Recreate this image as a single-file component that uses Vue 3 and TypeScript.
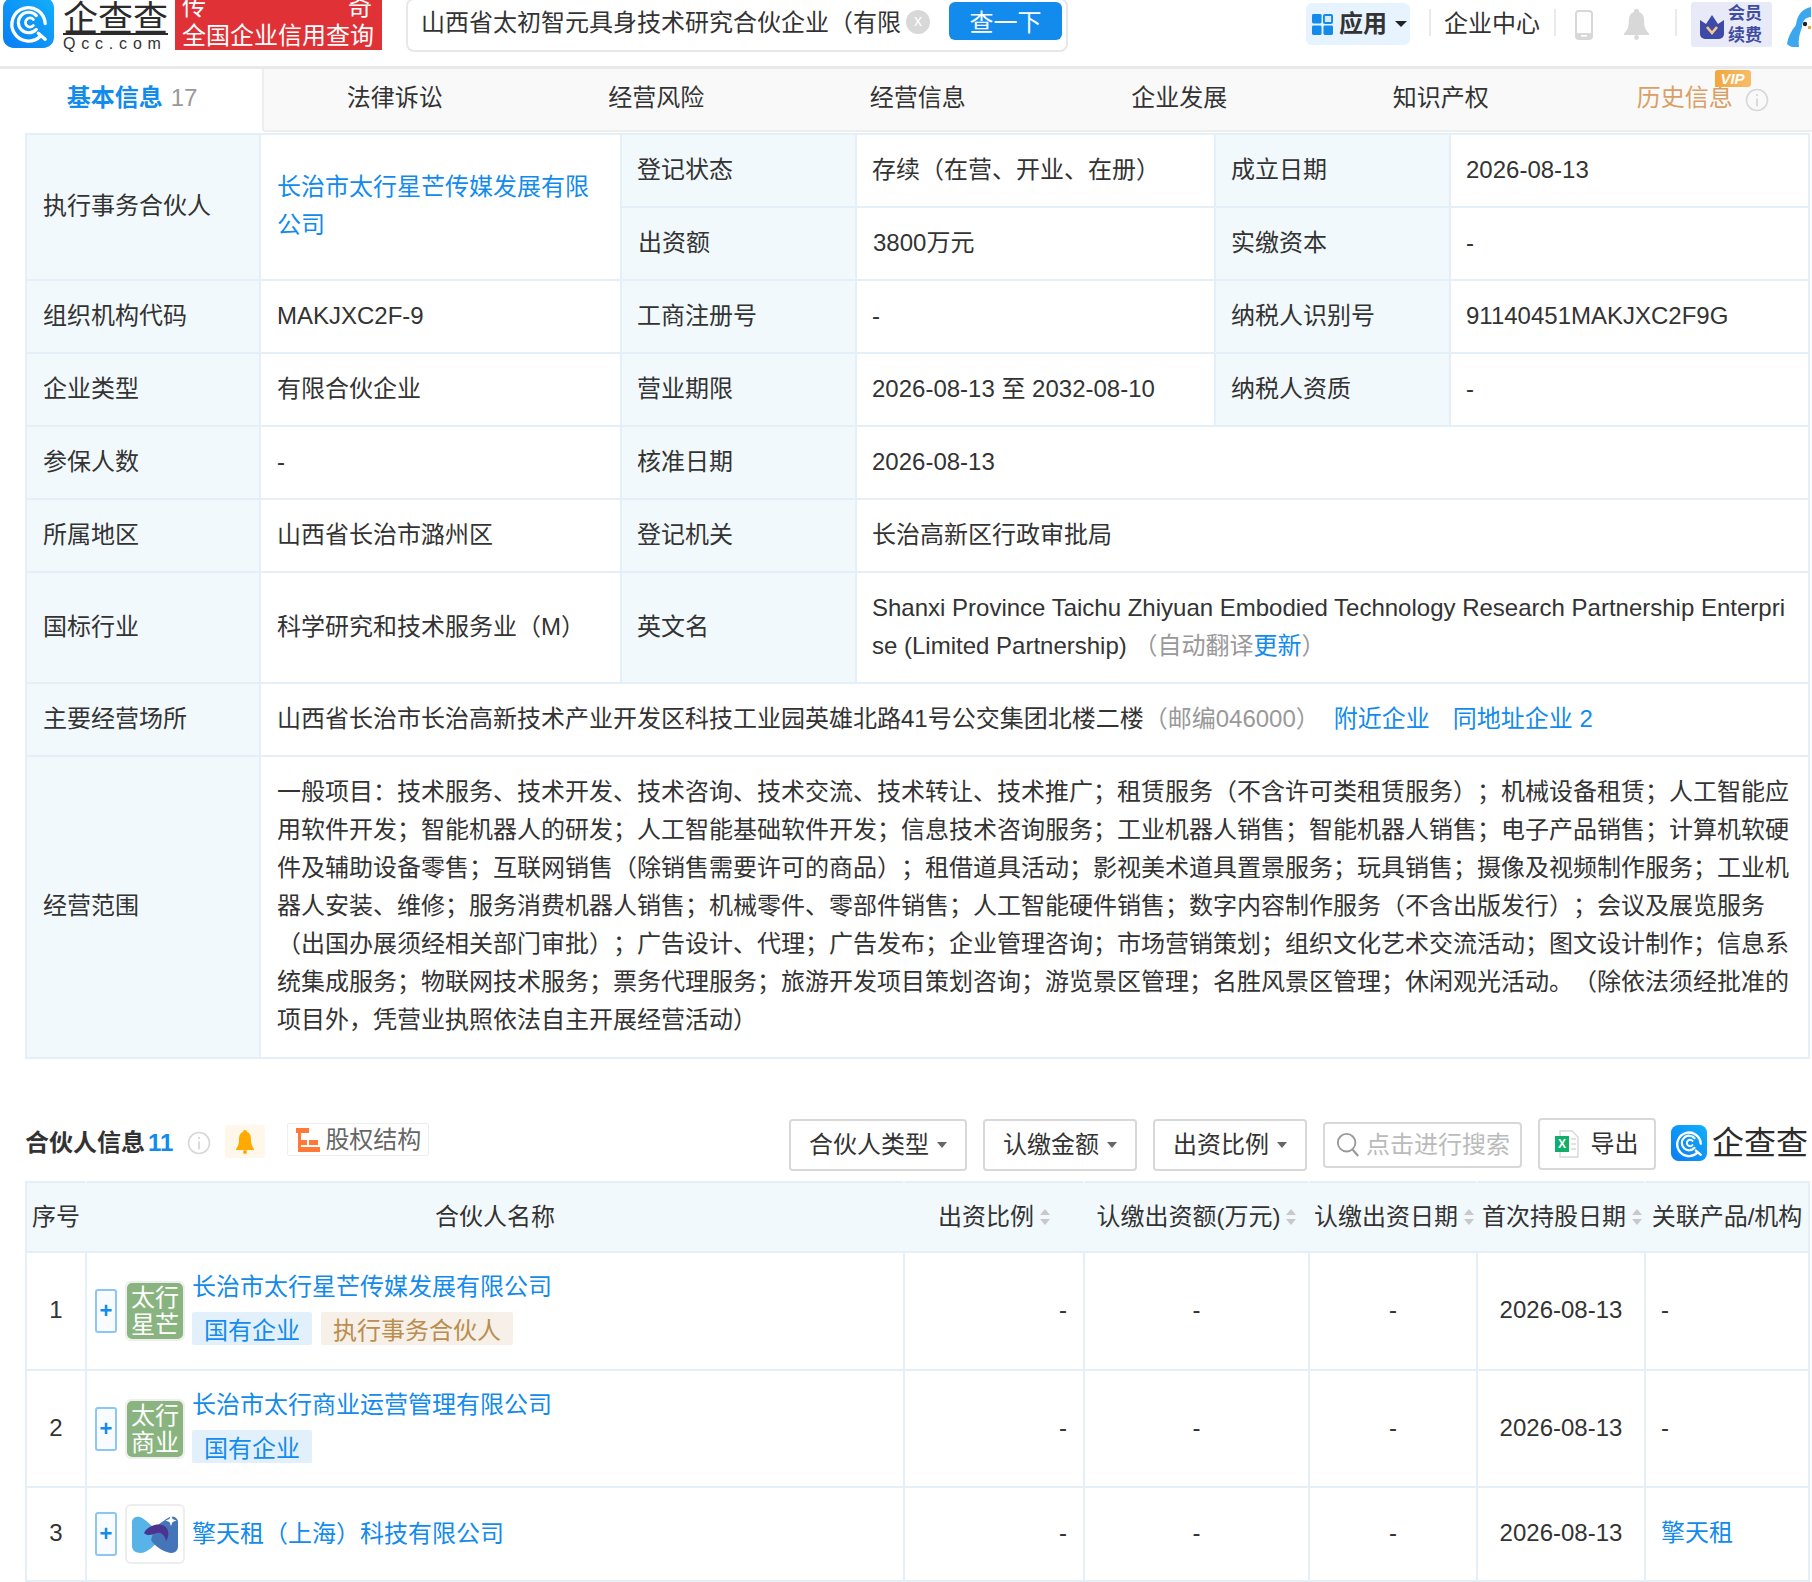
<script setup lang="ts">
interface Partner {
  index: number
  name: string
  mark?: string[]
  tags: { text: string; kind: 'blue' | 'tan' }[]
  product: string
}

const tabs = ['法律诉讼', '经营风险', '经营信息', '企业发展', '知识产权']

const filters = ['合伙人类型', '认缴金额', '出资比例']

// header cells of the partner table, sorted ones get the little arrows
const sortHeads = ['出资比例', '认缴出资额(万元)', '认缴出资日期', '首次持股日期']

const partners: Partner[] = [
  {
    index: 1,
    name: '长治市太行星芒传媒发展有限公司',
    mark: ['太行', '星芒'],
    tags: [
      { text: '国有企业', kind: 'blue' },
      { text: '执行事务合伙人', kind: 'tan' }
    ],
    product: '-'
  },
  {
    index: 2,
    name: '长治市太行商业运营管理有限公司',
    mark: ['太行', '商业'],
    tags: [{ text: '国有企业', kind: 'blue' }],
    product: '-'
  },
  {
    index: 3,
    name: '擎天租（上海）科技有限公司',
    tags: [],
    product: '擎天租'
  }
]
</script>

<template>
  <div class="page">
    <header class="topbar">
      <div class="brand">
        <svg class="brand-icon" viewBox="0 0 52 52">
          <defs>
            <linearGradient id="qg" x1="0" y1="1" x2="1" y2="0">
              <stop offset="0" stop-color="#0a7cf5" />
              <stop offset="1" stop-color="#12b0fa" />
            </linearGradient>
          </defs>
          <rect width="52" height="52" rx="11" fill="url(#qg)" />
          <path d="M38 40A17 17 0 1 1 43 27" fill="none" stroke="#fff" stroke-width="3.4" stroke-linecap="round" />
          <path d="M36 37l7 6" fill="none" stroke="#fff" stroke-width="3.4" stroke-linecap="round" />
          <path d="M34 33A10.5 10.5 0 1 1 34 19" fill="none" stroke="#fff" stroke-width="3.2" stroke-linecap="round" />
          <path d="M31 29A4.6 4.6 0 1 1 31 23" fill="none" stroke="#fff" stroke-width="2.8" stroke-linecap="round" />
        </svg>
        <div class="brand-text">
          <div class="brand-name">企查查</div>
          <div class="brand-url">Qcc.com</div>
        </div>
      </div>

      <div class="banner">
        <div class="banner-old"><span>传</span><span>奇</span></div>
        <div class="banner-now">全国企业信用查询</div>
      </div>

      <div class="search">
        <span class="search-text">山西省太初智元具身技术研究合伙企业（有限</span>
        <span class="search-clear">x</span>
        <button class="search-btn">查一下</button>
      </div>

      <div class="nav">
        <div class="apps">
          <svg class="apps-icon" viewBox="0 0 22 22">
            <rect width="10" height="10" rx="1.5" fill="#128bed" />
            <rect x="12.5" y="1" width="8.5" height="8.5" rx="1" fill="#d8ebfc" stroke="#128bed" stroke-width="2" />
            <rect y="12" width="10" height="10" rx="1.5" fill="#128bed" />
            <rect x="12" y="12" width="10" height="10" rx="1.5" fill="#128bed" />
          </svg>
          <span class="apps-text">应用</span>
          <i class="caret caret--dark"></i>
        </div>
        <i class="nav-sep nav-sep--first"></i>
        <span class="nav-link">企业中心</span>
        <i class="nav-sep"></i>
        <svg class="nav-phone" viewBox="0 0 18 30">
          <rect x="1" y="1" width="16" height="28" rx="3" fill="#fff" stroke="#d8d8d8" stroke-width="2" />
          <rect x="1" y="23" width="16" height="6" rx="2" fill="#d8d8d8" />
          <rect x="6" y="25" width="6" height="1.6" fill="#fff" />
        </svg>
        <svg class="nav-bell" viewBox="0 0 26 32">
          <path d="M13 0a2.6 2.6 0 0 1 2.6 3C20 4.4 21 9 21 13c0 6 1.5 9 5 12.5V27H0v-1.500C3.500 22 5 19 5 13c0-4 1-8.600 5.400-10A2.600 2.600 0 0 1 13 0z" fill="#d8d8d8" />
          <circle cx="13" cy="29.5" r="2.5" fill="#d8d8d8" />
        </svg>
        <i class="nav-sep nav-sep--last"></i>
        <div class="member">
          <svg class="member-icon" viewBox="0 0 24 24">
            <path d="M0 5l6 4 6-9 6 9 6-4v14a5 5 0 0 1-5 5H5a5 5 0 0 1-5-5z" fill="#3d4aa6" />
            <path d="M7 12l5 6 5-6" fill="none" stroke="#f6c88c" stroke-width="2.6" />
          </svg>
          <div class="member-text">会员<br />续费</div>
        </div>
        <svg class="penguin" viewBox="0 0 24 40">
          <path d="M24 0C14 2 10 9 9 18 4 24 1 30 0 37c2 2 4 3 6 3h18z" fill="#3ba7ef" />
          <path d="M24 10c-5 0-9 4-9 10-2 6-4 12-3 20h12z" fill="#fff" />
          <circle cx="18" cy="17" r="2.2" fill="#1c2430" />
          <path d="M21 19h3v3h-3z" fill="#f4a63a" />
        </svg>
      </div>
    </header>

    <nav class="tabs">
      <div class="tab tab--active">
        <b>基本信息</b><span class="tab-count">17</span>
      </div>
      <div v-for="tab in tabs" :key="tab" class="tab">{{ tab }}</div>
      <div class="tab tab--history">
        <span class="vip">VIP</span>
        <span>历史信息</span>
        <svg class="info-icon tab-info" viewBox="0 0 24 24">
          <circle cx="12" cy="12" r="10.5" fill="none" stroke="#d8d8d8" stroke-width="1.6" />
          <path d="M12 10.500v8M12 6v2" stroke="#d8d8d8" stroke-width="1.8" />
        </svg>
      </div>
    </nav>

    <main class="content">
      <table class="info">
        <colgroup>
          <col style="width: 234px" />
          <col style="width: 361px" />
          <col style="width: 235px" />
          <col style="width: 359px" />
          <col style="width: 235px" />
          <col />
        </colgroup>
        <tbody>
          <tr class="row">
            <td class="label" rowspan="2">执行事务合伙人</td>
            <td rowspan="2" class="owner"><a>长治市太行星芒传媒发展有限公司</a></td>
            <td class="label">登记状态</td>
            <td>存续（在营、开业、在册）</td>
            <td class="label">成立日期</td>
            <td>2026-08-13</td>
          </tr>
          <tr class="row">
            <td class="label">出资额</td>
            <td>3800万元</td>
            <td class="label">实缴资本</td>
            <td>-</td>
          </tr>
          <tr class="row">
            <td class="label">组织机构代码</td>
            <td>MAKJXC2F-9</td>
            <td class="label">工商注册号</td>
            <td>-</td>
            <td class="label">纳税人识别号</td>
            <td>91140451MAKJXC2F9G</td>
          </tr>
          <tr class="row">
            <td class="label">企业类型</td>
            <td>有限合伙企业</td>
            <td class="label">营业期限</td>
            <td>2026-08-13 至 2032-08-10</td>
            <td class="label">纳税人资质</td>
            <td>-</td>
          </tr>
          <tr class="row">
            <td class="label">参保人数</td>
            <td>-</td>
            <td class="label">核准日期</td>
            <td colspan="3">2026-08-13</td>
          </tr>
          <tr class="row">
            <td class="label">所属地区</td>
            <td>山西省长治市潞州区</td>
            <td class="label">登记机关</td>
            <td colspan="3">长治高新区行政审批局</td>
          </tr>
          <tr class="row-tall">
            <td class="label">国标行业</td>
            <td>科学研究和技术服务业（M）</td>
            <td class="label">英文名</td>
            <td colspan="3" class="english">
              Shanxi Province Taichu Zhiyuan Embodied Technology Research Partnership Enterprise (Limited Partnership)
              <span class="muted">（自动翻译<a>更新</a>）</span>
            </td>
          </tr>
          <tr class="row">
            <td class="label">主要经营场所</td>
            <td colspan="5" class="address">
              山西省长治市长治高新技术产业开发区科技工业园英雄北路41号公交集团北楼二楼<span class="muted">（邮编046000）</span>
              <a class="addr-link">附近企业</a><a class="addr-link">同地址企业 2</a>
            </td>
          </tr>
          <tr>
            <td class="label">经营范围</td>
            <td colspan="5" class="scope">
              一般项目：技术服务、技术开发、技术咨询、技术交流、技术转让、技术推广；租赁服务（不含许可类租赁服务）；机械设备租赁；人工智能应用软件开发；智能机器人的研发；人工智能基础软件开发；信息技术咨询服务；工业机器人销售；智能机器人销售；电子产品销售；计算机软硬件及辅助设备零售；互联网销售（除销售需要许可的商品）；租借道具活动；影视美术道具置景服务；玩具销售；摄像及视频制作服务；工业机器人安装、维修；服务消费机器人销售；机械零件、零部件销售；人工智能硬件销售；数字内容制作服务（不含出版发行）；会议及展览服务（出国办展须经相关部门审批）；广告设计、代理；广告发布；企业管理咨询；市场营销策划；组织文化艺术交流活动；图文设计制作；信息系统集成服务；物联网技术服务；票务代理服务；旅游开发项目策划咨询；游览景区管理；名胜风景区管理；休闲观光活动。（除依法须经批准的项目外，凭营业执照依法自主开展经营活动）
            </td>
          </tr>
        </tbody>
      </table>

      <section class="bar">
        <h2 class="bar-title">合伙人信息<span class="bar-count">11</span></h2>
        <svg class="info-icon bar-info" viewBox="0 0 24 24">
          <circle cx="12" cy="12" r="10.5" fill="none" stroke="#d8d8d8" stroke-width="1.6" />
          <path d="M12 10.500v8M12 6v2" stroke="#d8d8d8" stroke-width="1.8" />
        </svg>
        <span class="bar-bell">
          <svg viewBox="0 0 18 24" width="18" height="24">
            <path d="M9 0a2 2 0 0 1 2 2c3.500 1 4 5 4 8 0 4 1 6 3 9v1H0v-1c2-3 3-5 3-9 0-3 .5-7 4-8a2 2 0 0 1 2-2z" fill="#ffaa00" />
            <circle cx="9" cy="22" r="2" fill="#ffaa00" />
          </svg>
        </span>
        <span class="bar-struct">
          <svg viewBox="0 0 24 24" width="24" height="24">
            <path d="M0 0h13v5H0zM2 5h3v19H2zM2 12h9v5H2zM2 19h22v5H2zM13 12h9v5h-9z" fill="#ff7a38" />
            <path d="M5 5h8v7H5zM5 17h8v2H5z" fill="#fff" />
          </svg>
          股权结构
        </span>

        <div class="bar-tools">
          <button v-for="f in filters" :key="f" class="tool">
            {{ f }}<i class="caret"></i>
          </button>
          <div class="finder">
            <svg viewBox="0 0 26 28" width="24" height="26">
              <circle cx="11.5" cy="11.5" r="9.5" fill="none" stroke="#999" stroke-width="2" />
              <path d="M18 19l6 7" stroke="#999" stroke-width="2.4" />
            </svg>
            <span>点击进行搜索</span>
          </div>
          <button class="tool tool--export">
            <svg viewBox="0 0 24 28" width="24" height="28">
              <path d="M5 1h12l6 6v20H5z" fill="#fff" stroke="#d8d8d8" stroke-width="1.4" />
              <path d="M16 9h5M16 14h5M16 19h5" stroke="#d8d8d8" stroke-width="1.4" />
              <rect y="6" width="14" height="16" fill="#0fae6c" />
              <text x="7" y="18" class="xls">X</text>
            </svg>
            导出
          </button>
          <div class="stamp">
            <svg viewBox="0 0 52 52" width="36" height="36">
              <rect width="52" height="52" rx="11" fill="url(#qg)" />
              <path d="M38 40A17 17 0 1 1 43 27" fill="none" stroke="#fff" stroke-width="3.4" stroke-linecap="round" />
              <path d="M36 37l7 6" fill="none" stroke="#fff" stroke-width="3.4" stroke-linecap="round" />
              <path d="M34 33A10.5 10.5 0 1 1 34 19" fill="none" stroke="#fff" stroke-width="3.2" stroke-linecap="round" />
              <path d="M31 29A4.6 4.6 0 1 1 31 23" fill="none" stroke="#fff" stroke-width="2.8" stroke-linecap="round" />
            </svg>
            <span>企查查</span>
          </div>
        </div>
      </section>

      <table class="partners">
        <colgroup>
          <col style="width: 60px" />
          <col style="width: 818px" />
          <col style="width: 180px" />
          <col style="width: 225px" />
          <col style="width: 168px" />
          <col style="width: 168px" />
          <col />
        </colgroup>
        <thead>
          <tr>
            <th>序号</th>
            <th>合伙人名称</th>
            <th v-for="head in sortHeads" :key="head">
              <span class="head-cell">{{ head }}<i class="sorter"></i></span>
            </th>
            <th>关联产品/机构</th>
          </tr>
        </thead>
        <tbody>
          <tr v-for="p in partners" :key="p.index" :class="{ 'row-short': !p.tags.length }">
            <td class="center">{{ p.index }}</td>
            <td>
              <div class="partner">
                <span class="expand">+</span>
                <span class="logo">
                  <span v-if="p.mark" class="logo-mark">
                    <span v-for="line in p.mark" :key="line">{{ line }}</span>
                  </span>
                  <svg v-else viewBox="0 0 56 56" width="56" height="56">
                    <path d="M5 16c0-4 4-6 8-5 3 1 9 6 15 12l6 9c-5 6-11 12-16 14-5 2-13 1-13-6z" fill="#58b4e8" />
                    <path d="M51 16c0-4-4-6-8-5-3 1-9 6-15 10l-4 13c4 6 10 10 16 12 5 2 11 1 11-6z" fill="#4475b8" />
                    <path d="M17 27c3-6 11-10 18-8 7 2 8 10 4 16-1-6-5-9-9-8-4 1-9 4-13 0z" fill="#4a3490" />
                    <path d="M44 9l1.5 4 4 1.500-4 1.500-1.500 4-1.500-4-4-1.500 4-1.500z" fill="#fff" />
                  </svg>
                </span>
                <div class="partner-main" :class="{ 'partner-main--tagged': p.tags.length }">
                  <a>{{ p.name }}</a>
                  <div v-if="p.tags.length" class="tags">
                    <span v-for="t in p.tags" :key="t.text" class="tag" :class="`tag--${t.kind}`">{{ t.text }}</span>
                  </div>
                </div>
              </div>
            </td>
            <td class="right">-</td>
            <td class="center">-</td>
            <td class="center">-</td>
            <td class="center">2026-08-13</td>
            <td class="product">
              <a v-if="p.product !== '-'">{{ p.product }}</a>
              <template v-else>-</template>
            </td>
          </tr>
        </tbody>
      </table>
    </main>
  </div>
</template>

<style>
html,
body {
  margin: 0;
  overflow: hidden;
  background: #fff;
}
</style>

<style scoped>
.page {
  width: 1812px;
  height: 1582px;
  overflow: hidden;
  font-family: "Liberation Sans", "Noto Sans CJK SC", sans-serif;
  font-size: 24px;
  line-height: 38px;
  color: #333;
  background: #fff;
  text-spacing-trim: space-all;
  font-feature-settings: "chws" 0, "palt" 0;
}

a {
  color: #128bed;
}

.topbar {
  display: flex;
  height: 66px;
  overflow: hidden;
  border-bottom: 3px solid #e9e9e9;
  box-sizing: content-box;
}

.brand {
  display: flex;
  width: 175px;
  flex: none;
  padding-left: 3px;
  box-sizing: border-box;
}

.brand-icon {
  width: 51px;
  height: 51px;
  margin-top: -3px;
  flex: none;
}

.brand-text {
  margin-left: 9px;
}

.brand-name {
  font-size: 35px;
  line-height: 35px;
  color: #2b2b2b;
  width: 105px;
  border-bottom: 2px solid #2b2b2b;
  height: 32px;
  margin-top: 1px;
}

.brand-url {
  font-size: 16px;
  line-height: 15px;
  margin-top: 1px;
  letter-spacing: 5.8px;
  color: #333;
  white-space: nowrap;
}

.banner {
  width: 207px;
  height: 50px;
  flex: none;
  padding: 0 4px 0 7px;
  box-sizing: border-box;
  overflow: hidden;
  background: #e03236;
  color: #fff;
  line-height: 30px;
}

.banner-old {
  display: flex;
  justify-content: space-between;
  height: 29px;
  margin-top: -8px;
  padding-right: 6px;
}

.banner-now {
  white-space: nowrap;
}

.search {
  display: flex;
  align-items: center;
  width: 662px;
  height: 54px;
  flex: none;
  margin: -2px 0 0 24px;
  padding: 0 4px 0 13px;
  box-sizing: border-box;
  border: 2px solid #e8e8e8;
  border-radius: 8px;
  background: #fff;
}

.search-text {
  width: 484px;
  margin-top: -5px;
  white-space: nowrap;
}

.search-clear {
  width: 24px;
  height: 24px;
  margin: -6px 0 0 1px;
  border-radius: 50%;
  background: #d8d8d8;
  color: #fff;
  font-size: 16px;
  line-height: 22px;
  text-align: center;
}

.search-btn {
  width: 113px;
  height: 38px;
  margin: -8px 0 0 19px;
  padding: 3px 0 0;
  border: 0;
  border-radius: 6px;
  background: #128bed;
  color: #fff;
  font: inherit;
  line-height: 36px;
}

.nav {
  display: flex;
  flex: 1;
  align-items: flex-start;
  margin-left: 238px;
}

.apps {
  display: flex;
  align-items: center;
  width: 104px;
  height: 42px;
  margin-top: 3px;
  padding-left: 6px;
  box-sizing: border-box;
  border-radius: 6px;
  background: #e7f3fe;
}

.apps-icon {
  width: 21px;
  height: 21px;
}

.apps-text {
  margin-left: 6px;
  font-weight: 700;
}

.caret {
  display: inline-block;
  width: 0;
  height: 0;
  margin-left: 8px;
  border-top: 6px solid #666;
  border-left: 5px solid transparent;
  border-right: 5px solid transparent;
}

.caret--dark {
  border-top-color: #222;
  border-left-width: 6px;
  border-right-width: 6px;
}

.nav-sep {
  width: 2px;
  height: 27px;
  margin: 9px 14px 0;
  background: #eaeaea;
}

.nav-sep--first {
  margin-left: 19px;
  margin-right: 13px;
}

.nav-sep--last {
  margin-left: 26px;
}

.nav-link {
  margin-top: 5px;
}

.nav-phone {
  width: 18px;
  height: 30px;
  margin: 10px 0 0 5px;
}

.nav-bell {
  width: 25px;
  height: 31px;
  margin: 9px 0 0 31px;
}

.member {
  display: flex;
  align-items: center;
  width: 81px;
  height: 45px;
  margin-top: 2px;
  padding-left: 9px;
  box-sizing: border-box;
  border-radius: 3px;
  background: #e8eaf8;
}

.member-icon {
  width: 24px;
  height: 24px;
  flex: none;
  margin-top: 4px;
}

.member-text {
  margin-left: 4px;
  font-size: 17px;
  line-height: 22px;
  font-weight: 700;
  color: #3f4da0;
}

.penguin {
  width: 24px;
  height: 40px;
  margin: 7px 0 0 15px;
  flex: none;
}

.tabs {
  display: grid;
  grid-template-columns: 262px repeat(5, 261.5px) 1fr;
  height: 63px;
  margin-left: 2px;
}

.tab {
  display: flex;
  align-items: center;
  justify-content: center;
  position: relative;
  padding-bottom: 3px;
  box-sizing: border-box;
  background: #f9f9f9;
  border-bottom: 2px solid #eee;
}

.tab--active {
  background: #fff;
  border-bottom-color: #fff;
  border-right: 2px solid #eee;
}

.tab--active b {
  color: #128bed;
  font-weight: 700;
}

.tab-count {
  margin-left: 8px;
  color: #999;
}

.tab--history {
  color: #d9a066;
  padding-right: 14px;
}

.vip {
  position: absolute;
  top: 1px;
  left: 143px;
  width: 36px;
  height: 17px;
  background: linear-gradient(90deg, #f2a63c, #f7bd6a);
  border-radius: 3px 3px 3px 0;
  color: #fff;
  font-size: 15px;
  line-height: 17px;
  font-weight: 700;
  font-style: italic;
  text-align: center;
}

.info-icon {
  width: 24px;
  height: 24px;
  flex: none;
}

.tab-info {
  position: absolute;
  left: 173px;
  top: 19px;
}

.content {
  padding-left: 25px;
  width: 1785px;
}

table {
  width: 1785px;
  table-layout: fixed;
  border-collapse: collapse;
}

td,
th {
  padding: 0 16px;
  border: 2px solid #e5eff7;
  font-weight: 400;
}

.info {
  margin-top: 1px;
}

.info td {
  padding-bottom: 2px;
}

/* cells right of the first pair sit a pixel closer to their border */
.info td:nth-child(n + 3) {
  padding-left: 15px;
}

.info td.address,
.info td.scope {
  padding-left: 16px;
}

.info td.label {
  background: #f2f9fc;
}

.row {
  height: 73px;
}

.row-tall {
  height: 111px;
}

.english {
  word-break: break-all;
}

.muted {
  color: #999;
}

.addr-link + .addr-link {
  margin-left: 23px;
}

.addr-link {
  margin-left: 14px;
}

.scope {
  height: 302px;
  padding-right: 18px;
  box-sizing: border-box;
}

.bar {
  display: flex;
  align-items: flex-start;
  height: 122px;
  box-sizing: border-box;
  padding-top: 57px;
}

.bar-title {
  margin: 8px 0 0;
  font-size: 24px;
  font-weight: 700;
  line-height: 38px;
}

.bar-count {
  margin-left: 3px;
  color: #128bed;
}

.bar-info {
  margin: 15px 0 0 14px;
}

.bar-bell {
  display: flex;
  align-items: center;
  justify-content: center;
  width: 40px;
  height: 33px;
  margin: 9px 0 0 14px;
  background: #fff7ea;
  border-radius: 3px;
}

.bar-struct {
  display: flex;
  align-items: center;
  gap: 5px;
  width: 142px;
  height: 33px;
  margin: 7px 0 0 22px;
  padding-left: 8px;
  box-sizing: border-box;
  border: 1px solid #eee;
  border-radius: 2px;
  color: #666;
}

.bar-tools {
  display: flex;
  align-items: flex-start;
  gap: 16px;
  margin-left: auto;
}

.tool {
  display: flex;
  align-items: center;
  justify-content: center;
  height: 52px;
  margin-top: 3px;
  padding: 0 18px;
  box-sizing: border-box;
  border: 2px solid #d8d8d8;
  border-radius: 4px;
  background: #fff;
  color: #333;
  font: inherit;
}

.tool--export {
  width: 118px;
  padding: 0;
  margin-top: 2px;
  gap: 11px;
}

.xls {
  font-size: 12px;
  font-weight: 700;
  fill: #fff;
  text-anchor: middle;
}

.finder {
  display: flex;
  align-items: center;
  gap: 6px;
  width: 199px;
  height: 46px;
  margin-top: 6px;
  padding-left: 11px;
  box-sizing: border-box;
  border: 2px solid #d8d8d8;
  border-radius: 4px;
  color: #bbb;
  white-space: nowrap;
}

.stamp {
  display: flex;
  align-items: center;
  gap: 5px;
  margin: 9px 2px 0 -1px;
  font-size: 32px;
  line-height: 36px;
  color: #2b2b2b;
}

.partners th {
  height: 68px;
  padding: 0 4px;
  background: #f2f9fc;
  white-space: nowrap;
}

.partners th:not(:first-child) {
  border-left-color: #f2f9fc;
}

.partners th:not(:last-child) {
  border-right-color: #f2f9fc;
}

.partners td {
  box-sizing: border-box;
  height: 118px;
  padding: 0;
}

.partners tr:nth-child(2) td {
  height: 117px;
}

.partners .row-short td {
  height: 94px;
}

.head-cell {
  display: inline-flex;
  align-items: center;
}

.sorter {
  position: relative;
  width: 10px;
  height: 16px;
  margin-left: 6px;
}

.sorter::before,
.sorter::after {
  content: "";
  position: absolute;
  left: 0;
  border-left: 5px solid transparent;
  border-right: 5px solid transparent;
}

.sorter::before {
  top: 0;
  border-bottom: 6px solid #c8c8c8;
}

.sorter::after {
  bottom: 0;
  border-top: 6px solid #c8c8c8;
}

.partners td.center,
.partners td.right,
.partners td.product {
  padding-bottom: 2px;
}

.center {
  text-align: center;
}

.right {
  text-align: right;
  padding-right: 16px !important;
}

.product {
  padding-left: 15px !important;
}

.partner {
  display: flex;
  align-items: center;
  padding-left: 8px;
}

.expand {
  width: 22px;
  height: 44px;
  flex: none;
  box-sizing: border-box;
  border: 2px solid #8cc6f5;
  border-radius: 3px;
  background: #f8fbff;
  color: #128bed;
  font-size: 22px;
  font-weight: 700;
  line-height: 40px;
  text-align: center;
}

.logo {
  display: flex;
  align-items: center;
  justify-content: center;
  width: 60px;
  height: 60px;
  flex: none;
  margin: 0 7px 0 8px;
  box-sizing: border-box;
  border: 2px solid #eee;
  border-radius: 6px;
  background: #fff;
}

.logo-mark {
  display: flex;
  flex-direction: column;
  align-items: center;
  justify-content: center;
  width: 56px;
  height: 56px;
  border-radius: 5px;
  background: #8ab47f;
  color: #fff;
  line-height: 27px;
}

.partner-main--tagged {
  margin-bottom: 9px;
}

.tags {
  display: flex;
  gap: 9px;
  margin-top: 6px;
}

.tag {
  height: 33px;
  padding: 0 12px;
  border-radius: 2px;
  line-height: 38px;
  overflow: hidden;
}

.tag--blue {
  background: #e2f0fc;
  color: #128bed;
}

.tag--tan {
  background: #f6f0e9;
  color: #bb8d4f;
}
</style>
